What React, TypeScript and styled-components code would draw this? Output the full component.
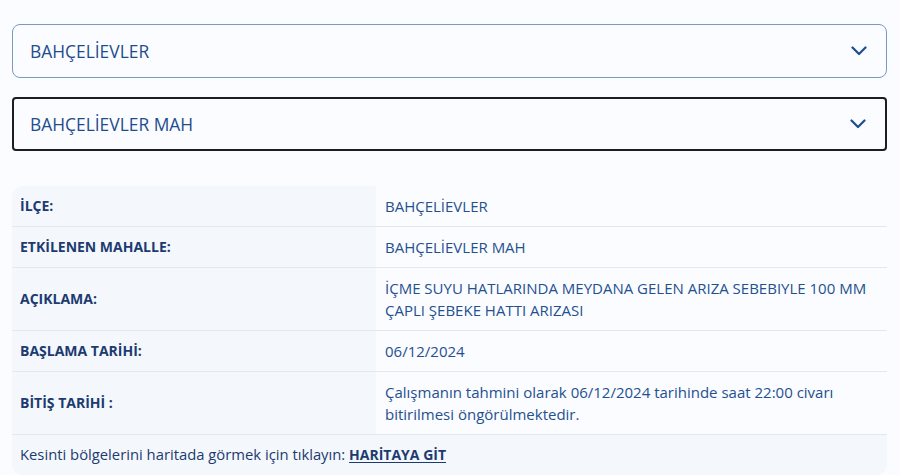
import React from "react";
import styled, { createGlobalStyle } from "styled-components";

const GlobalStyle = createGlobalStyle`
  html, body {
    margin: 0;
    padding: 0;
    background: #fafcff;
  }
  body {
    font-family: "Open Sans", "Lato", sans-serif;
    color: #1d3f78;
  }
`;

const Page = styled.div`
  padding: 24px 13px 0 12px;
  display: flex;
  flex-direction: column;
`;

const SelectBox = styled.div<{ $active?: boolean }>`
  box-sizing: border-box;
  height: 54px;
  display: flex;
  align-items: center;
  justify-content: space-between;
  padding: 0 19px 0 ${(p) => (p.$active ? "16px" : "17px")};
  border: ${(p) => (p.$active ? "2px solid #1b1d22" : "1px solid #7d97c3")};
  border-radius: ${(p) => (p.$active ? "4px" : "8px")};
  background: #fafcff;
  font-size: 17.4px;
  color: #1f4d8c;
  margin-bottom: 19px;
`;

const Chevron = () => (
  <svg width="16" height="10" viewBox="0 0 16 10" fill="none">
    <path d="M1.5 1.5 L8 8 L14.5 1.5" stroke="#1f4d8c" strokeWidth="2.2" strokeLinecap="round" strokeLinejoin="round" />
  </svg>
);

const Table = styled.div`
  margin-top: 16px;
  border-radius: 11px;
  overflow: hidden;
  background: #f4f7fc;
  display: flex;
  flex-direction: column;
`;

const Row = styled.div`
  display: grid;
  grid-template-columns: 364px 1fr;
  border-bottom: 1px solid #e3e7ee;
`;

const Label = styled.div`
  padding: 9px 8px;
  line-height: 22px;
  font-size: 14px;
  font-weight: 700;
  color: #1c3b70;
  display: flex;
  align-items: center;
`;

const Value = styled.div`
  background: #fafcff;
  padding: 9px 20px 9px 9px;
  line-height: 22px;
  font-size: 15px;
  color: #25508f;
`;

const Footer = styled.div`
  padding: 8px 8px 9px;
  line-height: 22px;
  font-size: 14.8px;
  color: #1c3b70;
`;

const MapLink = styled.a`
  font-size: 14px;
  font-weight: 700;
  color: #1c3b70;
  text-decoration: underline;
  text-underline-offset: 2px;
`;

const rows: [string, React.ReactNode][] = [
  ["İLÇE:", "BAHÇELİEVLER"],
  ["ETKİLENEN MAHALLE:", "BAHÇELİEVLER MAH"],
  ["AÇIKLAMA:", "İÇME SUYU HATLARINDA MEYDANA GELEN ARIZA SEBEBIYLE 100 MM ÇAPLI ŞEBEKE HATTI ARIZASI"],
  ["BAŞLAMA TARİHİ:", "06/12/2024"],
  ["BİTİŞ TARİHİ :", "Çalışmanın tahmini olarak 06/12/2024 tarihinde saat 22:00 civarı bitirilmesi öngörülmektedir."],
];

export default function App() {
  return (
    <>
      <GlobalStyle />
      <Page>
        <SelectBox>
          <span>BAHÇELİEVLER</span>
          <Chevron />
        </SelectBox>
        <SelectBox $active>
          <span>BAHÇELİEVLER MAH</span>
          <Chevron />
        </SelectBox>
        <Table>
          {rows.map(([label, value]) => (
            <Row key={label}>
              <Label>{label}</Label>
              <Value>{value}</Value>
            </Row>
          ))}
          <Footer>
            Kesinti bölgelerini haritada görmek için tıklayın: <MapLink href="#">HARİTAYA GİT</MapLink>
          </Footer>
        </Table>
      </Page>
    </>
  );
}
